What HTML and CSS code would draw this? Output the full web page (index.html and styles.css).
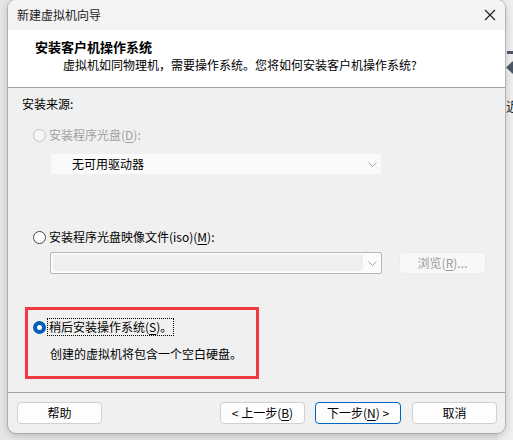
FILE: index.html
```html
<!DOCTYPE html>
<html lang="zh-CN">
<head>
<meta charset="utf-8">
<title>新建虚拟机向导</title>
<link rel="stylesheet" href="styles.css">
</head>
<body>
<div class="backwin">
  <div class="bw-bar"></div>
  <div class="bw-arrow"></div>
  <div class="bw-text">近</div>
</div>
<div class="dialog">
  <div class="titlebar">
    <span class="title">新建虚拟机向导</span>
    <svg class="close" width="12" height="12" viewBox="0 0 12 12"><path d="M1 1 L11 11 M11 1 L1 11" stroke="#1a1a1a" stroke-width="1.1" fill="none"/></svg>
  </div>
  <div class="header">
    <div class="h-title">安装客户机操作系统</div>
    <div class="h-sub">虚拟机如同物理机，需要操作系统。您将如何安装客户机操作系统?</div>
  </div>
  <div class="body">
    <div class="section-label">安装来源:</div>
    <div class="radio-row r1 disabled">
      <span class="radio"></span>
      <span class="label">安装程序光盘(<u>D</u>):</span>
    </div>
    <div class="combo flat">
      <span class="combo-text">无可用驱动器</span>
      <svg class="chev" width="9" height="5" viewBox="0 0 9 5"><path d="M0.5 0.5 L4.5 4.5 L8.5 0.5" stroke="#a8a8a8" fill="none"/></svg>
    </div>
    <div class="radio-row r2">
      <span class="radio"></span>
      <span class="label">安装程序光盘映像文件(iso)(<u>M</u>):</span>
    </div>
    <div class="iso-row">
      <div class="combo boxed">
        <span class="field"></span>
        <svg class="chev" width="9" height="5" viewBox="0 0 9 5"><path d="M0.5 0.5 L4.5 4.5 L8.5 0.5" stroke="#a8a8a8" fill="none"/></svg>
      </div>
      <div class="browse">浏览(<u>R</u>)...</div>
    </div>
    <div class="highlight">
      <div class="radio-row r3">
        <span class="radio checked"></span>
        <span class="label focus">稍后安装操作系统(<u>S</u>)。</span>
      </div>
      <div class="desc">创建的虚拟机将包含一个空白硬盘。</div>
    </div>
  </div>
  <div class="footer">
    <div class="btn">帮助</div>
    <div class="spacer"></div>
    <div class="btn">&lt; 上一步(<u>B</u>)</div>
    <div class="btn default">下一步(<u>N</u>) &gt;</div>
    <div class="btn cancel">取消</div>
  </div>
</div>
</body>
</html>
```
FILE: styles.css
```css
* { box-sizing: border-box; }
html, body { margin: 0; padding: 0; }
body {
  width: 513px;
  height: 440px;
  overflow: hidden;
  background: #e6e6e6;
  font-family: "Noto Sans CJK SC", "Microsoft YaHei", sans-serif;
  font-size: 12px;
  font-weight: 400;
  color: #000;
  position: relative;
}
u { text-decoration: underline; text-underline-offset: 2px; text-decoration-thickness: 1px; }

.backwin {
  position: absolute;
  left: 498px;
  top: 0;
  width: 40px;
  height: 440px;
  background: #efefef;
}
.bw-bar {
  position: absolute;
  left: 9px;
  top: 51px;
  width: 10px;
  height: 3px;
  background: #4b5866;
}
.bw-arrow {
  position: absolute;
  left: 10px;
  top: 63px;
  width: 9px;
  height: 9px;
  background: #4b5866;
  transform: rotate(45deg);
}
.bw-text {
  position: absolute;
  left: 8px;
  top: 98px;
  font-size: 13px;
  line-height: 16px;
  color: #222;
}

.dialog {
  position: absolute;
  left: 8px;
  top: 0;
  width: 497px;
  height: 433px;
  border-radius: 8px;
  overflow: hidden;
  box-shadow: 0 0 0 1px rgba(0,0,0,0.16), 0 2px 8px rgba(0,0,0,0.22);
  display: flex;
  flex-direction: column;
  background: #f0f0f0;
}

.titlebar {
  height: 30px;
  flex: none;
  background: #f3f3f3;
  display: flex;
  align-items: center;
  padding-left: 9px;
  padding-right: 8px;
}
.title { font-size: 12px; line-height: 16px; color: #1a1a1a; flex: 1; }
.close { margin-right: 1px; }

.header {
  height: 58px;
  flex: none;
  background: #ffffff;
  border-bottom: 1px solid #a0a0a0;
  padding-top: 8px;
}
.h-title {
  padding-left: 27px;
  font-size: 13px;
  font-weight: bold;
  line-height: 17px;
}
.h-sub {
  padding-left: 55px;
  margin-top: 2px;
  font-size: 12px;
  line-height: 16px;
}

.body {
  height: 305px;
  flex: none;
  border-bottom: 1px solid #a0a0a0;
  padding: 8px 0 0 14px;
}
.section-label { line-height: 16px; }

.radio-row {
  display: flex;
  align-items: center;
  height: 16px;
  line-height: 16px;
}
.r1 { margin-top: 15px; margin-left: 11px; }
.r2 { margin-top: 54px; margin-left: 11px; }
.radio {
  width: 13px;
  height: 13px;
  border-radius: 50%;
  border: 1px solid #444;
  background: #fff;
  flex: none;
  margin-right: 2px;
}
.disabled .radio { border-color: #c4c4c4; background: #f6f6f6; }
.disabled .label { color: #a0a0a0; }
.radio.checked {
  border: 4px solid #005fb8;
  background: #fff;
}
.label { padding-left: 1px; }
.label.focus {
  outline: 1px dotted #000;
  outline-offset: 0;
  padding: 0 1px 0 1px;
}

.combo {
  height: 22px;
  display: flex;
  align-items: center;
  position: relative;
}
.combo.flat {
  margin-top: 10px;
  margin-left: 28px;
  width: 332px;
  background: #fafafa;
  border: 1px solid #f0f0f0;
  border-radius: 3px;
}
.combo-text { padding-left: 21px; line-height: 16px; }
.chev { position: absolute; right: 4px; top: 8px; }

.iso-row {
  display: flex;
  margin-top: 7px;
  margin-left: 28px;
  height: 22px;
}
.combo.boxed {
  width: 332px;
  background: #fbfbfb;
  border: 1px solid #b8b8b8;
  border-radius: 2px;
  padding: 2px;
}
.field {
  width: 310px;
  height: 16px;
  background: #efefef;
}
.browse {
  margin-left: 17px;
  width: 87px;
  height: 22px;
  background: #f8f8f8;
  border: 1px solid #ececec;
  border-radius: 4px;
  color: #9a9a9a;
  display: flex;
  align-items: center;
  justify-content: center;
  line-height: 16px;
}

.highlight {
  margin-top: 33px;
  margin-left: 3px;
  width: 234px;
  height: 72px;
  border: 3px solid #f03a3f;
  padding: 9px 0 0 5px;
}
.r3 { margin-left: 0; }
.desc {
  margin-top: 11px;
  margin-left: 17px;
  line-height: 16px;
}

.footer {
  flex: 1;
  display: flex;
  padding: 9px 8px 0 9px;
  align-items: flex-start;
}
.spacer { flex: 1; }
.btn {
  width: 85px;
  height: 22px;
  background: #fdfdfd;
  border: 1px solid #d0d0d0;
  border-radius: 4px;
  display: flex;
  align-items: center;
  justify-content: center;
  line-height: 16px;
  margin-left: 10px;
}
.btn:first-child { margin-left: 0; }
.btn.default { border-color: #0067c0; width: 86px; }
.btn.cancel { margin-left: 11px; }
```
